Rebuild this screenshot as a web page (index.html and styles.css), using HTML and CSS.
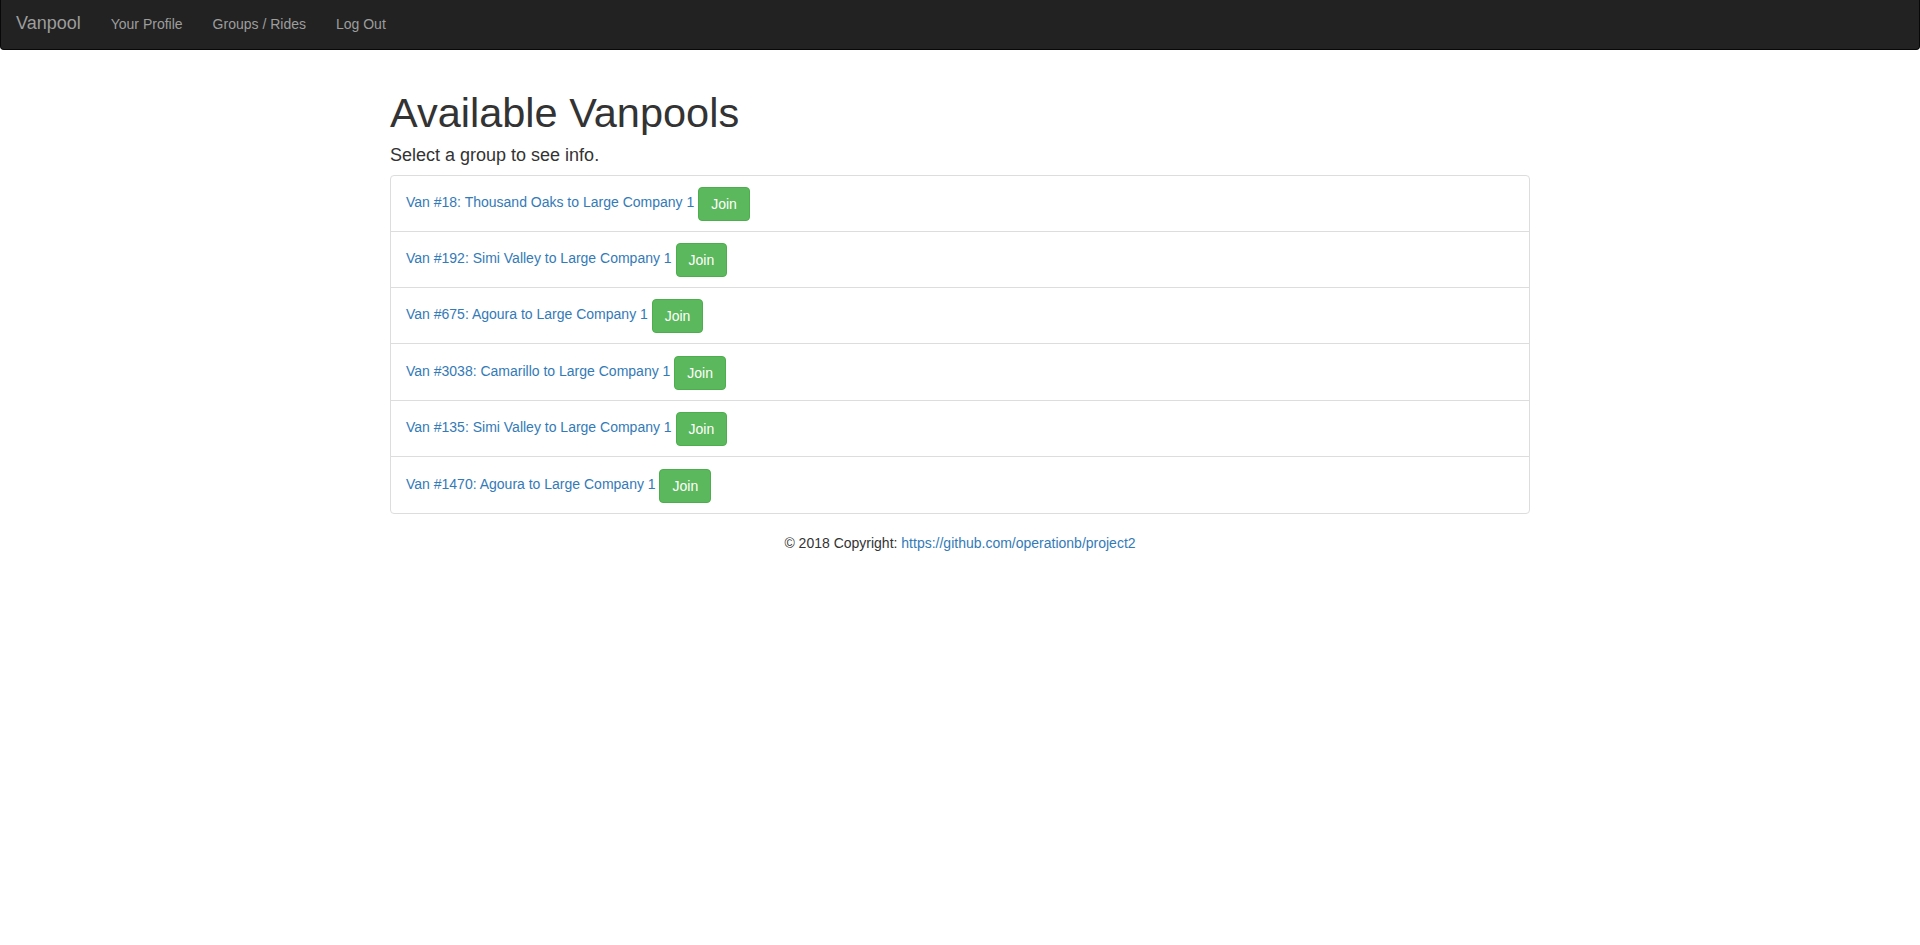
FILE: index.html
```html
<!DOCTYPE html>
<html lang="en">
<head>
<meta charset="utf-8">
<title>Vanpool</title>
<link rel="stylesheet" href="styles.css">
</head>
<body>
<nav class="navbar">
  <a class="brand" href="#">Vanpool</a>
  <ul class="nav">
    <li><a href="#">Your Profile</a></li>
    <li><a href="#">Groups / Rides</a></li>
    <li><a href="#">Log Out</a></li>
  </ul>
</nav>
<main class="container">
  <h1>Available Vanpools</h1>
  <p class="sub">Select a group to see info.</p>
  <ul class="list-group">
    <li class="list-item"><a href="#">Van #18: Thousand Oaks to Large Company 1</a> <button class="btn">Join</button></li>
    <li class="list-item"><a href="#">Van #192: Simi Valley to Large Company 1</a> <button class="btn">Join</button></li>
    <li class="list-item"><a href="#">Van #675: Agoura to Large Company 1</a> <button class="btn">Join</button></li>
    <li class="list-item"><a href="#">Van #3038: Camarillo to Large Company 1</a> <button class="btn">Join</button></li>
    <li class="list-item"><a href="#">Van #135: Simi Valley to Large Company 1</a> <button class="btn">Join</button></li>
    <li class="list-item"><a href="#">Van #1470: Agoura to Large Company 1</a> <button class="btn">Join</button></li>
  </ul>
</main>
<footer class="footer">© 2018 Copyright: <a href="#">https://github.com/operationb/project2</a></footer>
</body>
</html>
```

FILE: styles.css
```css
* { box-sizing: border-box; }
html, body { margin: 0; padding: 0; }
body {
  font-family: "Liberation Sans", Arial, sans-serif;
  font-size: 14px;
  line-height: 20px;
  color: #333;
  background: #fff;
}
a { color: #337ab7; text-decoration: none; }

.navbar {
  display: flex;
  align-items: flex-start;
  height: 50px;
  background: #222;
  border: 1px solid #080808;
  border-top: 0;
  border-radius: 0 0 4px 4px;
  margin-bottom: 20px;
}
.brand {
  display: block;
  padding: 13px 15px 0 15px;
  font-size: 18px;
  line-height: 20px;
  color: #9d9d9d;
}
.nav {
  display: flex;
  list-style: none;
  margin: 0;
  padding: 0;
}
.nav a {
  display: block;
  padding: 14px 15px 0 15px;
  line-height: 20px;
  color: #9d9d9d;
}

.container {
  display: flow-root;
  width: 1170px;
  margin: 0 auto;
  padding: 0 15px;
}
h1 {
  font-size: 41.5px;
  line-height: 44px;
  font-weight: 500;
  margin: 21px 0 8px;
  color: #333;
}
.sub {
  font-size: 18px;
  line-height: 24px;
  margin: 0 0 8px;
}
.list-group {
  list-style: none;
  margin: 0 0 19px;
  padding: 0;
}
.list-item {
  border: 1px solid #ddd;
  padding: 11px 15px 10px;
  margin-bottom: -1px;
  background: #fff;
}
.list-item:nth-child(n+4) { padding-top: 11.5px; }
.list-item:first-child { border-radius: 4px 4px 0 0; }
.list-item:last-child { border-radius: 0 0 4px 4px; margin-bottom: 0; }
.btn {
  display: inline-block;
  vertical-align: -2px;
  font-family: inherit;
  font-size: 14px;
  line-height: 20px;
  padding: 6px 12px;
  color: #fff;
  background: #5cb85c;
  border: 1px solid #4cae4c;
  border-radius: 4px;
  cursor: pointer;
}
.footer {
  text-align: center;
  line-height: 20px;
}
```
